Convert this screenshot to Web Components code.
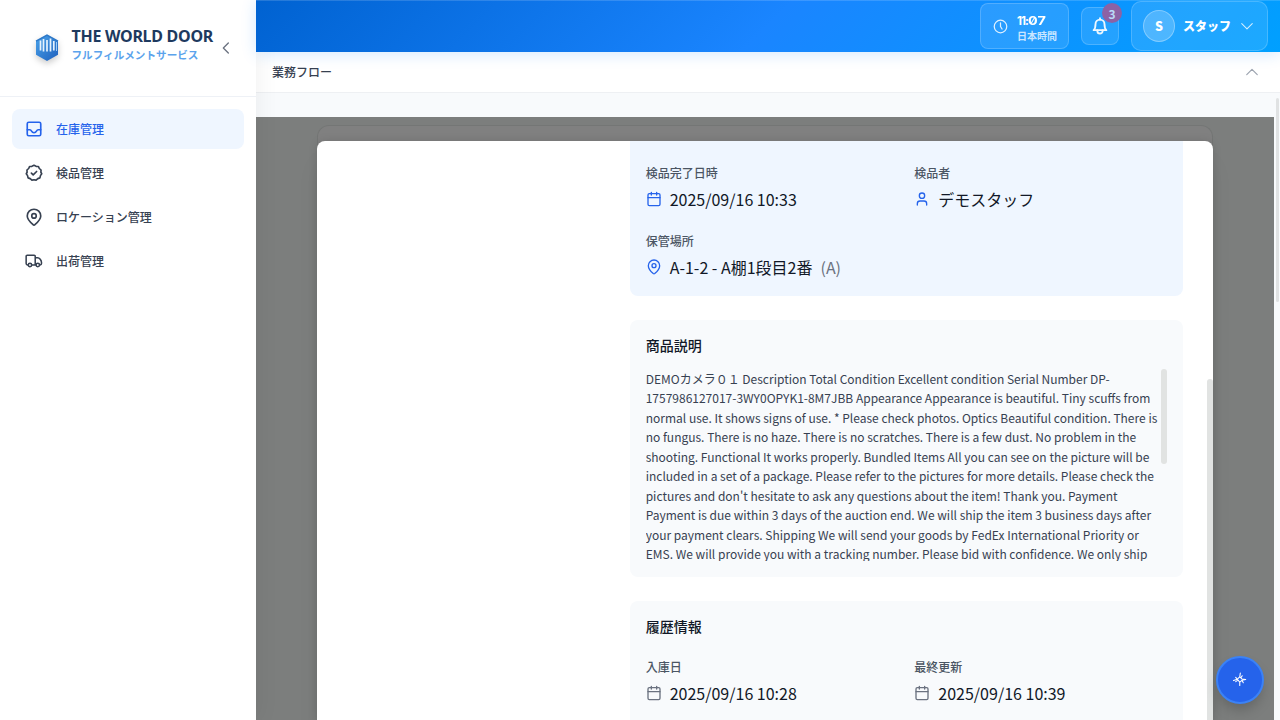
<!DOCTYPE html>
<html lang="ja">
<head>
<meta charset="utf-8">
<title>THE WORLD DOOR</title>
<style>
html,body{margin:0;height:100%;overflow:hidden}
body{font-family:"Noto Sans CJK JP","Noto Sans",sans-serif;font-size:16px;line-height:24px;color:#111827;background:#f8fafc}
</style>
</head>
<body>
<wd-app></wd-app>
<script>
const define = (name, css, html) => customElements.define(name, class extends HTMLElement {
  constructor() {
    super();
    this.attachShadow({ mode: 'open' }).innerHTML = `<style>*{box-sizing:border-box}${css}</style>${typeof html === 'function' ? html(this) : html}`;
  }
});

const ICONS = {
  inbox: '<rect x="3" y="3" width="18" height="18" rx="2"/><path d="M3 13h3.500c1 0 1.500.5 2 1.500C9.300 16 10.500 17 12 17s2.700-1 3.500-2.500c.5-1 1-1.500 2-1.500H21"/>',
  badge: '<path d="M12 1.800l2.800 1.300 3 .2 1.300 2.700 2.300 2-.2 3 1.100 2-1.700 2.500-.7 3-2.800 1-2.300 2-2.800-.5-2.800.5-2.300-2-2.800-1-.7-3L1.700 13l1.100-2-.2-3 2.300-2 1.300-2.700 3-.2z"/><path d="M8.500 12.200l2.400 2.400 4.600-4.600"/>',
  pin: '<path d="M21 10.600c0 4.600-5 9.200-7.800 11.700a1.500 1.500 0 0 1-2.400 0C8 19.800 3 15.200 3 10.600a9 9 0 0 1 18 0z"/><circle cx="12" cy="10.500" r="3"/>',
  place: '<path d="M20.500 10c0 5-5.500 10.200-7.400 11.800a1.800 1.800 0 0 1-2.200 0C9 20.200 3.500 15 3.500 10a8.500 8.500 0 0 1 17 0z"/><circle cx="12" cy="10" r="3"/>',
  truck: '<g transform="translate(.6 .6) scale(.93)"><path d="M14 18V5.500A1.500 1.500 0 0 0 12.500 4h-10A1.500 1.500 0 0 0 1 5.500V16a2 2 0 0 0 2 2h1M9 18h6.500M14 7.500h3.500c2.500 0 5.500 4 5.500 7V16a2 2 0 0 1-2 2h-.5"/><circle cx="6.500" cy="18" r="2.400"/><circle cx="17.700" cy="18" r="2.400"/></g>',
  calendar: '<path d="M8 2v4M16 2v4M3 10h18"/><rect x="3" y="4" width="18" height="18" rx="2"/>',
  user: '<circle cx="12" cy="7" r="4"/><path d="M19 21v-2a4 4 0 0 0-4-4H9a4 4 0 0 0-4 4v2"/>',
  clock: '<circle cx="12" cy="12" r="10"/><path d="M12 6v6l2.500 4"/>',
  bell: '<path d="M3.500 17.500c2-1.700 2.500-3.500 2.500-8a6 6 0 0 1 12 0c0 4.500.5 6.300 2.500 8z"/><path d="M8.500 17.500v1a3.500 3.500 0 0 0 7 0v-1M12 1.500v2"/>',
  left: '<path d="M15.500 4.500L8 12l7.500 7.500"/>',
  down: '<path d="M3 8l9 9 9-9"/>',
  up: '<path d="M3 16.500l9-9 9 9"/>',
  spark: '<path d="M13.500 0l-1 7 4 4 7 1-7 1.500-4 3.500 0 6M12.500 7L8 11.500l4.500 5.500M8 11.500L1 14M5 8l3 3.500M16.500 13.500L19 18M5 16l3-2M17 5l-2 3"/>'
};

define('wd-icon',
  ':host{display:block;flex:none}svg{display:block;width:100%;height:100%;overflow:visible}',
  el => `<svg viewBox="0 0 24 24" fill="none" stroke="currentColor" stroke-width="${el.getAttribute('weight') || 2}" stroke-linecap="round" stroke-linejoin="round">${ICONS[el.getAttribute('name')]}</svg>`);

define('wd-brand',
  `:host{display:flex;height:97px;border-bottom:1px solid #eef1f6;padding:25px 0 0 35px;align-items:flex-start}
   .logo{width:24px;height:28px;margin-top:9px;filter:drop-shadow(0 3px 3px #0003)}
   .txt{margin-left:12.500px;width:146px;white-space:nowrap}
   .name{font:700 16px/22px "Noto Sans",sans-serif;color:#1e3a5f;letter-spacing:-.28px}
   .sub{font-size:10.600px;line-height:16px;font-weight:600;color:#5ba3ec}
   wd-icon{width:16px;height:16px;margin-top:15px;color:#6b7280}`,
  `<svg class="logo" viewBox="0 0 24 28"><defs><linearGradient id="g" x2="1" y2="1"><stop stop-color="#4aa3ea"/><stop offset="1" stop-color="#1f60bd"/></linearGradient></defs>
   <path d="M12 1l11 6.200v13.600L12 27 1 20.800V7.200z" fill="url(#g)"/><path d="M1 7.200L12 1l11 6.200" fill="none" stroke="#2d78c8" stroke-width="1.500"/>
   <path d="M5.500 6.500v10M8.500 5v12.500M12 6v11.500M15.500 4.500v13M18.800 7v9.500" stroke="#e5f2fd" stroke-width="1.700"/><path d="M21.500 8v9" stroke="#9ccbf4"/></svg>
   <div class="txt"><div class="name">THE WORLD DOOR</div><div class="sub">フルフィルメントサービス</div></div>
   <wd-icon name="left" weight="2"></wd-icon>`);

define('wd-nav-item',
  `:host{display:flex;align-items:center;gap:13px;height:40px;padding:0 13px;border-radius:8px;font-size:12px;font-weight:500;color:#374151}
   :host([active]){background:#eff6ff;color:#2563eb}
   wd-icon{width:18px;height:18px}`,
  el => `<wd-icon name="${el.getAttribute('icon')}" weight="2.200"></wd-icon><slot></slot>`);

define('wd-sidebar',
  `:host{display:block;width:256px;background:#fff;position:relative;z-index:1;box-shadow:4px 0 20px #0000000d}
   nav{padding:12px;display:grid;gap:4px}`,
  `<wd-brand></wd-brand><nav>
    <wd-nav-item icon="inbox" active>在庫管理</wd-nav-item>
    <wd-nav-item icon="badge">検品管理</wd-nav-item>
    <wd-nav-item icon="pin">ロケーション管理</wd-nav-item>
    <wd-nav-item icon="truck">出荷管理</wd-nav-item></nav>`);

define('wd-topbar',
  `:host{display:flex;align-items:center;justify-content:flex-end;gap:12px;height:52px;padding:0 12px;color:#fff;
     background:linear-gradient(135deg,#0062d1 0%,#1a85ff 50%,#00a0ff 100%);box-shadow:0 2px 14px #1a85ff30,inset 0 1px #ffffff26;position:relative;z-index:1}
   .box{display:flex;align-items:center;background:#ffffff1c;border:1px solid #ffffff30}
   .clock{width:89px;height:46px;border-radius:8px;padding-left:12px;gap:9px}
   .clock wd-icon{width:15px;height:15px;opacity:.85}
   .time{font:700 11.500px/13px Inter,sans-serif;font-feature-settings:"zero";letter-spacing:-.9px;white-space:nowrap;margin-top:5px}
   .time span{display:inline-block;transform:scaleX(1.250);transform-origin:0 0;letter-spacing:.1px}
   .zone{font-size:10px;line-height:14px;margin-top:1px;font-weight:600;color:#ffffffc0}
   .bell{width:38px;height:38px;border-radius:8px;justify-content:center;position:relative}
   .bell wd-icon{width:18px;height:18px;opacity:.92}
   .count{position:absolute;left:20px;top:-5px;width:20px;height:20px;border-radius:50%;background:#8c62a5;color:#b9daf8;font-size:12px;line-height:22px;font-weight:700;text-align:center}
   .user{width:137px;height:50px;border-radius:10px;padding:0 12px 0 11px}
   .avatar{width:32px;height:32px;border-radius:50%;background:#ffffff33;border:1px solid #ffffff4d;text-align:center;line-height:30px;font-size:12.500px;font-weight:800}
   .who{font-size:12px;font-weight:800;margin-left:8px;flex:1}
   .user>wd-icon{width:14px;height:14px;margin-right:1px;opacity:.8}`,
  `<div class="box clock"><wd-icon name="clock" weight="2"></wd-icon><div><div class="time">11:<span>07</span></div><div class="zone">日本時間</div></div></div>
   <div class="box bell"><wd-icon name="bell" weight="2.500"></wd-icon><span class="count">3</span></div>
   <div class="box user"><div class="avatar">S</div><span class="who">スタッフ</span><wd-icon name="down" weight="1.800"></wd-icon></div>`);

define('wd-flowbar',
  `:host{display:flex;height:41px;align-items:center;justify-content:space-between;padding:0 21px 0 16px;background:#fff;border-bottom:1px solid #eef0f3;font-size:12px;font-weight:500;color:#374151}
   wd-icon{width:14px;height:14px;color:#9ca3af}`,
  `<span>業務フロー</span><wd-icon name="up"></wd-icon>`);

define('wd-field',
  `:host{display:block}.l{font-size:12px;line-height:24px;color:#4b5563;font-weight:500}
   .v{display:flex;align-items:center;gap:8px;height:24px;margin-top:2px;white-space:nowrap}
   wd-icon{width:16px;height:16px;color:var(--icon,#6b7280)}
   ::slotted(span){color:#6b7280}`,
  el => `<div class="l">${el.getAttribute('label')}</div><div class="v"><wd-icon name="${el.getAttribute('icon')}"></wd-icon><slot></slot></div>`);

define('wd-card',
  `:host{display:block;background:#f8fafc;border-radius:8px;padding:16px}
   :host([tone=blue]){background:#eff6ff;--icon:#2563eb}
   h3{margin:0;font-size:14px;line-height:19px;font-weight:500;color:#111827}`,
  el => (el.hasAttribute('heading') ? `<h3>${el.getAttribute('heading')}</h3>` : '') + '<slot></slot>');

define('wd-detail',
  `:host{display:grid;grid-template-columns:1fr 553.330px;gap:24px;height:579px;padding:0 30px 0 24px;background:#fff;border-radius:8px 8px 0 0;overflow:hidden;position:relative;box-shadow:0 20px 25px -5px #0000001a,0 0 10px #0000001f}
   .col{display:flex;flex-direction:column;gap:24px;grid-column:2;min-width:0}
   .col>*{flex:none}
   .pair{display:grid;grid-template-columns:1fr 1fr;gap:18px 16px}
   .first{border-radius:0 0 8px 8px;padding-top:19.670px;padding-bottom:17px}
   .desc{margin-top:14px;height:192px;overflow:hidden;position:relative;font-size:12px;line-height:19.500px;color:#374151;padding-right:6px}
   .bar{position:absolute;right:0;width:6px;border-radius:3px;background:#e1e3e2}
   .hist{margin-top:19px}.last{height:150px}`,
  `<div class="col">
    <wd-card tone="blue" class="first"><div class="pair">
      <wd-field label="検品完了日時" icon="calendar">2025/09/16 10:33</wd-field>
      <wd-field label="検品者" icon="user">デモスタッフ</wd-field>
      <wd-field label="保管場所" icon="place">A-1-2 - A棚1段目2番<span>(A)</span></wd-field></div></wd-card>
    <wd-card heading="商品説明"><div class="desc">DEMOカメラ０１ Description Total Condition Excellent condition Serial Number DP-1757986127017-3WY0OPYK1-8M7JBB Appearance Appearance is beautiful. Tiny scuffs from normal use. It shows signs of use. * Please check photos. Optics Beautiful condition. There is no fungus. There is no haze. There is no scratches. There is a few dust. No problem in the shooting. Functional It works properly. Bundled Items All you can see on the picture will be included in a set of a package. Please refer to the pictures for more details. Please check the pictures and don't hesitate to ask any questions about the item! Thank you. Payment Payment is due within 3 days of the auction end. We will ship the item 3 business days after your payment clears. Shipping We will send your goods by FedEx International Priority or EMS. We will provide you with a tracking number. Please bid with confidence. We only ship<i class="bar" style="top:0;height:95px"></i></div></wd-card>
    <wd-card heading="履歴情報" class="last"><div class="pair hist">
      <wd-field label="入庫日" icon="calendar">2025/09/16 10:28</wd-field>
      <wd-field label="最終更新" icon="calendar">2025/09/16 10:39</wd-field></div></wd-card>
   </div><i class="bar" style="top:238px;height:350px"></i>`);

define('wd-overlay',
  `:host{display:block;width:1018px;height:603px;background:#7c7e7d;padding:8px 61px 0;overflow:hidden}
   .under{height:595px;border:1px solid #747675;border-bottom:0;border-radius:12px 12px 0 0;background:#808080}
   wd-detail{margin:15px -1px 0}`,
  `<div class="under"><wd-detail></wd-detail></div>`);

define('wd-fab',
  `:host{position:absolute;right:16px;bottom:16px;width:48px;height:48px;border-radius:50%;background:#2563eb;border:2px solid #3b82f6;box-sizing:border-box;box-shadow:0 8px 14px -3px #00000038;color:#fff;display:grid;place-items:center;z-index:3}
   wd-icon{width:13px;height:13px;margin:-1px 1px 0 0}`,
  `<wd-icon name="spark" weight="2"></wd-icon>`);

define('wd-app',
  `:host{display:flex;height:720px;width:1280px;position:relative;overflow:hidden;background:#f8fafc}
   main{flex:1;min-width:0}
   .page{padding-top:24px;position:relative}
   .thumb{position:absolute;right:1px;top:5px;width:3px;height:204px;background:#e0e2e3;border-radius:2px}`,
  `<wd-sidebar></wd-sidebar><main><wd-topbar></wd-topbar><wd-flowbar></wd-flowbar><div class="page"><wd-overlay></wd-overlay><i class="thumb"></i></div></main><wd-fab></wd-fab>`);
</script>
</body>
</html>
